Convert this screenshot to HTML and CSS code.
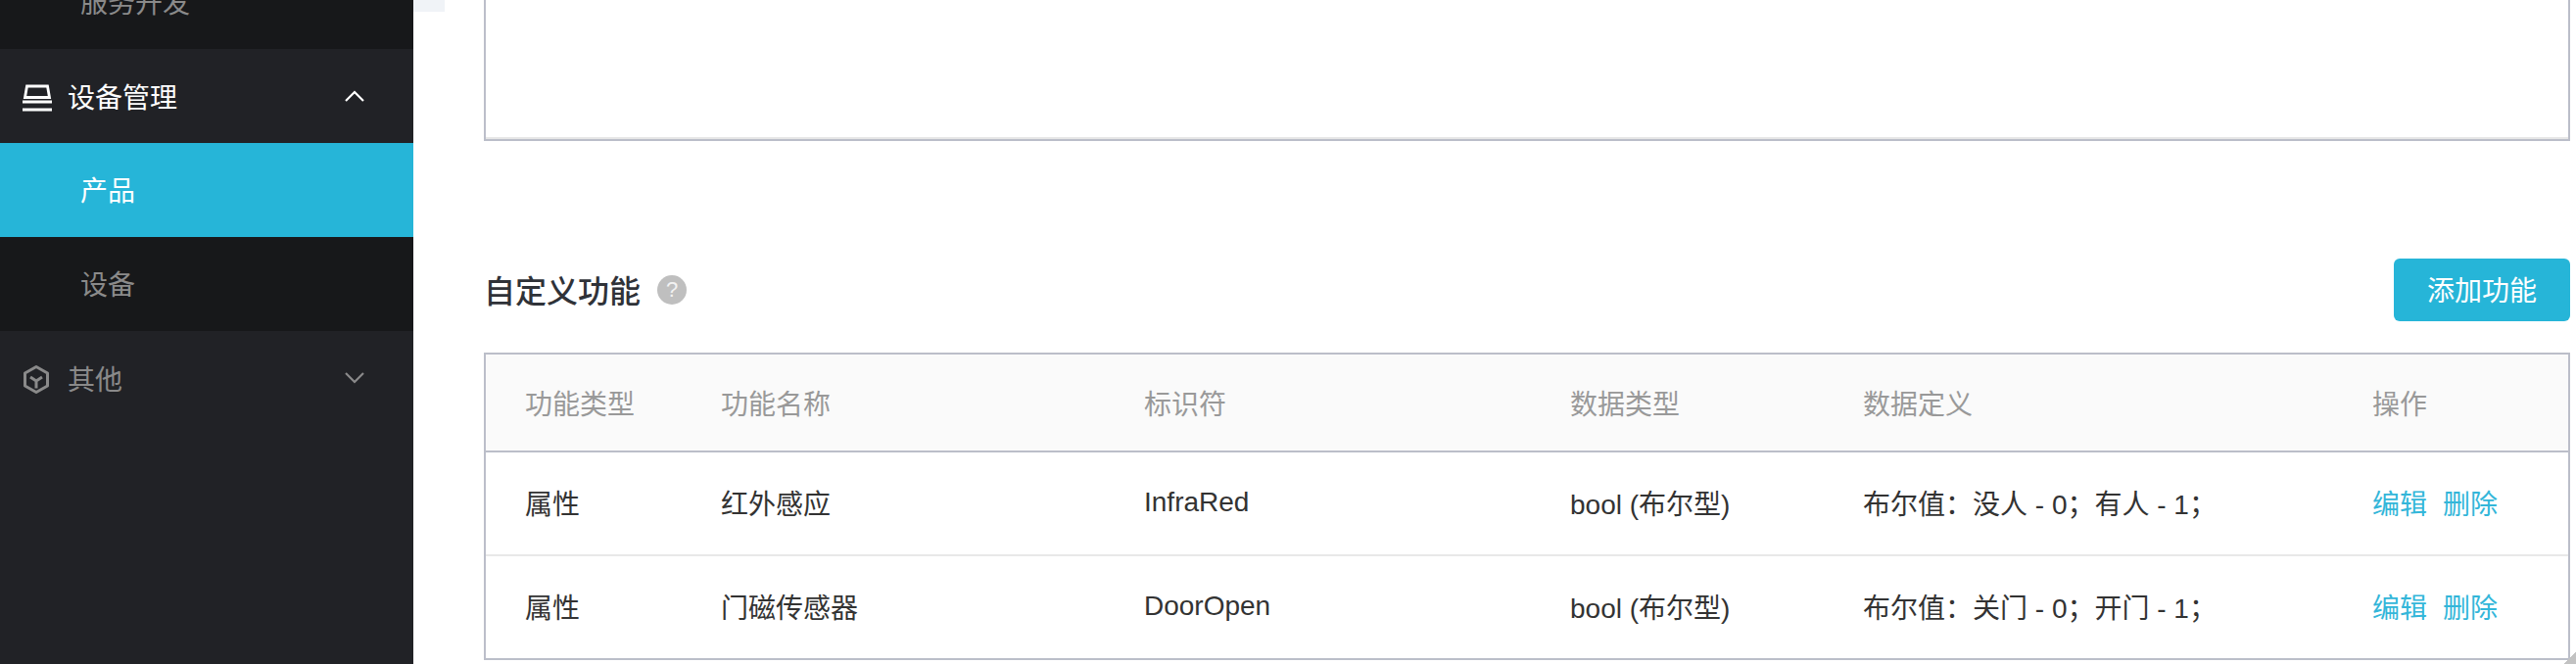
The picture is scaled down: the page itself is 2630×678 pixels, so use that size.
FILE: index.html
```html
<!DOCTYPE html>
<html lang="zh-CN">
<head>
    <meta charset="UTF-8" />
    <title>产品</title>
    <link rel="stylesheet" href="styles.css">
</head>
<body>
<div class="layout">
    <aside class="sidebar">
        <div class="sub-item">服务开发</div>
        <div class="menu-head open">
            <svg class="menu-icon" viewBox="0 0 30 32" fill="none" stroke="currentColor" stroke-width="2.8">
                <path d="M4.5 6h21l2 11.5h-25z" />
                <path d="M0 22h30M0 30h30" />
            </svg>
            <span class="menu-label">设备管理</span>
            <svg class="chevron" viewBox="0 0 20 12" fill="none" stroke="currentColor" stroke-width="2.2">
                <path d="M1 11l9-9 9 9" />
            </svg>
        </div>
        <div class="sub-item active">产品</div>
        <div class="sub-item">设备</div>
        <div class="menu-head">
            <svg class="menu-icon tall" viewBox="0 0 30 36" fill="none" stroke="currentColor" stroke-width="3" stroke-linejoin="round">
                <path d="M14 6.5l11.5 6.5v13l-11.5 6.5-11.5-6.5v-13z" />
                <path d="M8 17l6 4 6-4M14 21v7.5" />
            </svg>
            <span class="menu-label">其他</span>
            <svg class="chevron" viewBox="0 0 20 12" fill="none" stroke="currentColor" stroke-width="2.2">
                <path d="M1 1l9 9 9-9" />
            </svg>
        </div>
    </aside>

    <div class="gutter"></div>

    <main class="content">
        <div class="top-box"></div>

        <div class="section-head">
            <h2 class="section-title">自定义功能</h2>
            <span class="help">?</span>
            <button class="add-btn">添加功能</button>
        </div>

        <table class="feature-table">
            <colgroup>
                <col class="col-type">
                <col class="col-name">
                <col class="col-id">
                <col class="col-data">
                <col class="col-def">
                <col class="col-ops">
            </colgroup>
            <thead>
                <tr>
                    <th>功能类型</th>
                    <th>功能名称</th>
                    <th>标识符</th>
                    <th>数据类型</th>
                    <th>数据定义</th>
                    <th>操作</th>
                </tr>
            </thead>
            <tbody>
                <tr>
                    <td>属性</td>
                    <td>红外感应</td>
                    <td>InfraRed</td>
                    <td>bool (布尔型)</td>
                    <td>布尔值：没人 - 0；有人 - 1；</td>
                    <td><a class="op">编辑</a><a class="op">删除</a></td>
                </tr>
                <tr>
                    <td>属性</td>
                    <td>门磁传感器</td>
                    <td>DoorOpen</td>
                    <td>bool (布尔型)</td>
                    <td>布尔值：关门 - 0；开门 - 1；</td>
                    <td><a class="op">编辑</a><a class="op">删除</a></td>
                </tr>
            </tbody>
        </table>
    </main>
</div>
<div class="resize-corner"></div>
</body>
</html>
```

FILE: styles.css
```css
html, body {
    height: 100%;
}

body {
    margin: 0;
    overflow: hidden;
    background: #fff;
    color: #333;
    font-family: "Liberation Sans", "Noto Sans CJK SC", sans-serif;
    font-size: 28px;
}

.layout {
    display: flex;
    height: 678px;
    overflow: hidden;
}

.sidebar {
    flex: 0 0 422px;
    height: 678px;
    background: #212226;
}

.sub-item {
    height: 96px;
    line-height: 100px;
    padding-left: 82px;
    background: #17181a;
    color: #8a8a8a;
}

.sub-item:first-child {
    margin-top: -46px;
}

.sub-item.active {
    background: #26b5d8;
    color: #fff;
}

.menu-head {
    display: flex;
    align-items: center;
    height: 96px;
    padding: 0 50px 0 23px;
    background: #212226;
    color: #8a8a8a;
}

.menu-head.open {
    color: #fff;
}

.menu-icon {
    flex: none;
    width: 30px;
    height: 32px;
}

.menu-icon.tall {
    height: 36px;
}

.menu-label {
    margin-left: 16px;
    flex: 1;
}

.chevron {
    width: 20px;
    height: 12px;
}

.gutter {
    flex: 0 0 32px;
    height: 12px;
    background: #f0f3f7;
}

.content {
    flex: 0 0 2130px;
    margin-left: 40px;
}

.top-box {
    height: 142px;
    border: 2px solid #bbbec9;
    border-top: none;
    box-shadow: inset 0 -2px 0 #e6e6e6;
}

.section-head {
    display: flex;
    align-items: center;
    height: 64px;
    margin-top: 120px;
}

.section-title {
    margin: 0 0 3px;
    font-size: 32px;
    font-weight: 500;
    color: #2f3238;
}

.help {
    width: 30px;
    height: 30px;
    margin-left: 17px;
    border-radius: 50%;
    background: #bfbfbf;
    color: #f2f2f2;
    font-size: 22px;
    line-height: 30px;
    text-align: center;
}

.add-btn {
    width: 180px;
    height: 64px;
    margin-left: auto;
    padding: 0 0 2px;
    border: none;
    border-radius: 6px;
    background: #26b5d8;
    color: #fff;
    font: inherit;
}

.feature-table {
    width: 100%;
    margin-top: 32px;
    border: 2px solid #bbbec9;
    border-collapse: separate;
    border-spacing: 0;
    table-layout: fixed;
}

.col-type { width: 202px; }
.col-name { width: 432px; }
.col-id { width: 435px; }
.col-data { width: 299px; }
.col-def { width: 520px; }
.col-ops { width: 238px; }

.feature-table th,
.feature-table td {
    padding: 0 0 0 38px;
    text-align: left;
    font-weight: 400;
    white-space: nowrap;
}

.feature-table th:first-child,
.feature-table td:first-child {
    padding-left: 40px;
}

.feature-table th {
    height: 98px;
    background: #fafafa;
    color: #999;
    border-bottom: 2px solid #bbbec9;
}

.feature-table td {
    height: 101px;
    padding-bottom: 3px;
    color: #333;
    border-bottom: 2px solid #e8e8e8;
}

.feature-table tbody tr:last-child td {
    border-bottom: none;
}

.op {
    margin-right: 16px;
    color: #33b6d9;
}

.resize-corner {
    position: absolute;
    right: 0;
    top: 665px;
    width: 13px;
    height: 13px;
    background: linear-gradient(135deg, transparent 50%, #c2c2c2 50%);
}
```
